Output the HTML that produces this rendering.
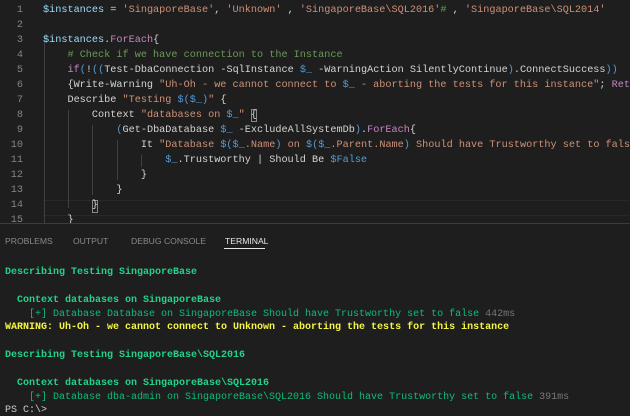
<!DOCTYPE html>
<html><head><meta charset="utf-8"><style>
html,body{margin:0;padding:0;width:630px;height:406px;overflow:hidden;background:#1e1e1e;}
.ed{position:absolute;left:0;top:0;width:630px;height:223px;overflow:hidden;background:#1e1e1e;}
.ln{position:absolute;left:0;width:23px;text-align:right;color:#858585;font:10.2px "Liberation Mono",monospace;}
.cl{position:absolute;left:43px;white-space:pre;color:#d4d4d4;font:10.2px "Liberation Mono",monospace;}
.g{position:absolute;width:1px;background:#404040;}
.v{color:#9cdcfe}.s{color:#ce9178}.c{color:#6a9955}.k{color:#c586c0}.b{color:#569cd6}.f{color:#dcdcaa}
.panel{position:absolute;left:0;top:223px;width:630px;height:183px;border-top:1px solid #3c3c3c;background:#1e1e1e;}
.tab{position:absolute;top:12px;font:8.6px "Liberation Sans",sans-serif;color:#8a8a8a;}
.t{position:absolute;left:5px;white-space:pre;font:bold 10px "Liberation Mono",monospace;}
.gr{color:#23d18b}.gn{color:#0dbc79;font-weight:normal}.y{color:#f5f543}.ms{color:#777;font-weight:normal}
</style></head><body>
<div class="ed">
<div style="position:absolute;left:43px;top:200px;width:587px;height:14px;border-top:1px solid #282828;border-bottom:1px solid #282828;"></div>
<div class="g" style="left:44px;top:35px;height:188px"></div>
<div class="g" style="left:68px;top:110px;height:98px"></div>
<div class="g" style="left:92px;top:125px;height:70px"></div>
<div class="g" style="left:117px;top:140px;height:40px"></div>
<div class="g" style="left:141px;top:155px;height:12px"></div>
<div style="position:absolute;left:92px;top:200px;width:6px;height:13px;border:1px solid #888;box-sizing:border-box"></div>
<div style="position:absolute;left:251px;top:109px;width:6px;height:13px;border:1px solid #888;box-sizing:border-box"></div>
<div class="ln" style="top:5px">1</div><div class="ln" style="top:20px">2</div><div class="ln" style="top:35px">3</div><div class="ln" style="top:50px">4</div><div class="ln" style="top:65px">5</div><div class="ln" style="top:80px">6</div><div class="ln" style="top:95px">7</div><div class="ln" style="top:110px">8</div><div class="ln" style="top:125px">9</div><div class="ln" style="top:140px">10</div><div class="ln" style="top:155px">11</div><div class="ln" style="top:170px">12</div><div class="ln" style="top:185px">13</div><div class="ln" style="top:200px">14</div><div class="ln" style="top:215px">15</div>
<div class="cl" style="top:5px"><span class="v">$instances</span> = <span class="s">'SingaporeBase'</span>, <span class="s">'Unknown'</span> , <span class="s">'SingaporeBase\SQL2016'</span><span class="c">#</span> , <span class="s">'SingaporeBase\SQL2014'</span></div>
<div class="cl" style="top:35px"><span class="v">$instances</span>.<span class="k">ForEach</span>{</div>
<div class="cl" style="top:50px">    <span class="c"># Check if we have connection to the Instance</span></div>
<div class="cl" style="top:65px">    <span class="k">if</span><span class="b">(</span>!<span class="b">((</span>Test-DbaConnection -SqlInstance <span class="b">$_</span> -WarningAction SilentlyContinue<span class="b">)</span>.ConnectSuccess<span class="b">))</span></div>
<div class="cl" style="top:80px">    {Write-Warning <span class="s">"Uh-Oh - we cannot connect to <span class="b">$_</span> - aborting the tests for this instance"</span>; <span class="k">Return</span>}</div>
<div class="cl" style="top:95px">    Describe <span class="s">"Testing <span class="b">$(</span><span class="b">$_</span><span class="b">)</span>"</span> {</div>
<div class="cl" style="top:110px">        Context <span class="s">"databases on <span class="b">$_</span>"</span> {</div>
<div class="cl" style="top:125px">            <span class="b">(</span>Get-DbaDatabase <span class="b">$_</span> -ExcludeAllSystemDb<span class="b">)</span>.<span class="k">ForEach</span>{</div>
<div class="cl" style="top:140px">                It <span class="s">"Database <span class="b">$(</span><span class="b">$_</span>.Name<span class="b">)</span> on <span class="b">$(</span><span class="b">$_</span>.Parent.Name<span class="b">)</span> Should have Trustworthy set to false"</span></div>
<div class="cl" style="top:155px">                    <span class="b">$_</span>.Trustworthy | Should Be <span class="b">$False</span></div>
<div class="cl" style="top:170px">                }</div>
<div class="cl" style="top:185px">            }</div>
<div class="cl" style="top:200px">        }</div>
<div class="cl" style="top:215px">    }</div>
</div>
<div class="panel">
<div class="tab" style="left:5px">PROBLEMS</div>
<div class="tab" style="left:73px">OUTPUT</div>
<div class="tab" style="left:131px">DEBUG CONSOLE</div>
<div class="tab" style="left:225px;color:#e7e7e7">TERMINAL</div>
<div style="position:absolute;left:224px;top:24px;width:41px;height:1px;background:#e7e7e7"></div>
<div class="t gr" style="top:43px">Describing Testing SingaporeBase</div>
<div class="t gr" style="top:71px">  Context databases on SingaporeBase</div>
<div class="t gn" style="top:85px">    [+] Database Database on SingaporeBase Should have Trustworthy set to false <span class="ms">442ms</span></div>
<div class="t y" style="top:98px">WARNING: Uh-Oh - we cannot connect to Unknown - aborting the tests for this instance</div>
<div class="t gr" style="top:126px">Describing Testing SingaporeBase\SQL2016</div>
<div class="t gr" style="top:154px">  Context databases on SingaporeBase\SQL2016</div>
<div class="t gn" style="top:168px">    [+] Database dba-admin on SingaporeBase\SQL2016 Should have Trustworthy set to false <span class="ms">391ms</span></div>
<div class="t" style="top:181px;color:#ccc;font-weight:normal">PS C:\&gt;</div>
</div>
</body></html>
